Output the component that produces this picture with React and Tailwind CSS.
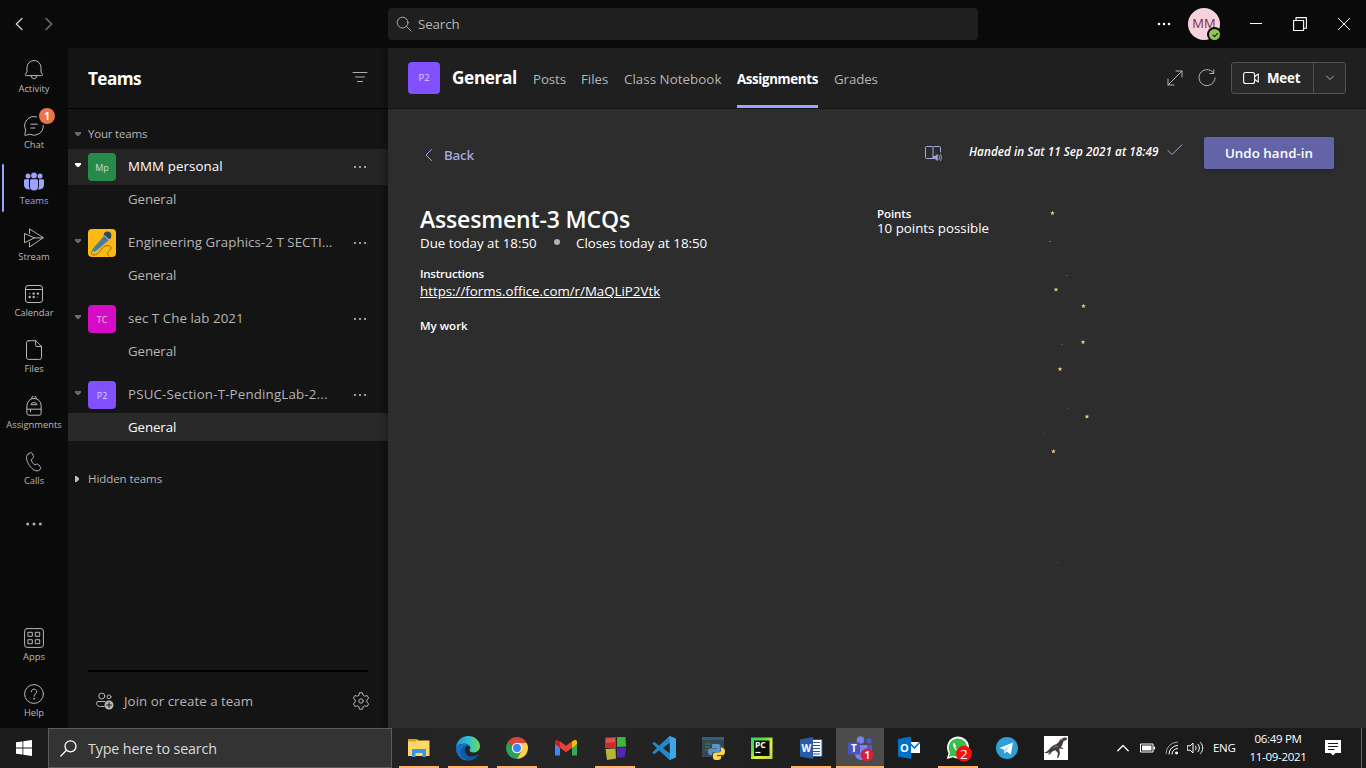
import React from "react";

function Svg({ w = 20, h = w, vb, className = "", sw = 1, children }) {
  return (
    <svg width={w} height={h} viewBox={vb || `0 0 ${w} ${h}`} className={`shrink-0 ${className}`} fill="none" stroke="currentColor" strokeWidth={sw} strokeLinecap="round" strokeLinejoin="round">
      {children}
    </svg>
  );
}

function Dots({ w = 16, r = 1.2, gap = 5, className = "" }) {
  return (
    <svg width={w} height="6" className={`shrink-0 ${className}`} fill="currentColor">
      <circle cx={w / 2 - gap} cy="3" r={r} />
      <circle cx={w / 2} cy="3" r={r} />
      <circle cx={w / 2 + gap} cy="3" r={r} />
    </svg>
  );
}

/* ---------- title bar ---------- */

function TitleBar() {
  return (
    <header className="flex h-12 shrink-0 items-center bg-[#0a0a0a]">
      <div className="flex w-[388px] items-center gap-[22px] pl-[15px]">
        <Svg w={8} h={14} className="text-[#d0d0d0]" sw={1.3}><path d="M7 1.5 1.3 7 7 12.5" /></Svg>
        <Svg w={8} h={14} className="text-[#7a7a7a]" sw={1.3}><path d="M1 1.5 6.7 7 1 12.5" /></Svg>
      </div>
      <div className="flex h-8 w-[590px] items-center rounded bg-[#1f1f1f] pl-2">
        <Svg w={16} className="text-[#adadad]"><circle cx="6.6" cy="6.6" r="5.4" /><path d="m10.5 10.5 4.6 4.6" /></Svg>
        <span className="pt-[2px] pl-[6px] text-[13.3px] tracking-[-0.1px] text-[#b5b5b5]">Search</span>
      </div>
      <Dots className="ml-[178px] text-white" r={1.25} />
      <div className="relative ml-4 flex size-8 items-center justify-center rounded-full bg-[#f6d2dd] text-[13px] font-medium tracking-[0px] text-[#7d2a45]">
        MM
        <span className="absolute right-0 bottom-0 flex size-[11px] items-center justify-center rounded-full bg-[#92c353] ring-2 ring-[#0a0a0a]">
          <Svg w={8} className="text-[#16240a]" sw={1.2}><path d="M2 4.2 3.5 5.7 6.4 2.6" /></Svg>
        </span>
      </div>
      <Svg w={12} className="ml-[30px] text-white" sw={1}><path d="M0 5.5h12" /></Svg>
      <Svg w={14} className="ml-[31px] text-white" sw={1.1}><path d="M.6 3.5h10v10H.6zM3 3.2V.6h10.4v10.6h-2.6" /></Svg>
      <Svg w={12} className="ml-[31px] text-white" sw={1}><path d="m.3.3 11.4 11.4M11.7.3.3 11.7" /></Svg>
    </header>
  );
}

/* ---------- app rail ---------- */

const railIcons = {
  Activity: (
    <Svg w={20}><path d="M2 15.6c-.6 0-.9-.5-.6-1L3 12V7.500a7 7 0 0 1 14 0V12l1.600 2.600c.3.5 0 1-.6 1zM7.200 15.900c.3 1.900 1.500 2.900 2.800 2.900s2.500-1 2.800-2.900" /></Svg>
  ),
  Chat: (
    <Svg w={20}><path d="M12.500.9A9.300 9.300 0 0 0 1.800 14.200L.7 18.700c-.1.500.2.8.7.700l4.300-1.200A9.300 9.300 0 0 0 19.300 9.500M6.800 8.200h6.600M6.800 12h4" /></Svg>
  ),
  Stream: (
    <Svg w={20}><path d="M5.500 5.500V.9L19.300 9.700 5.500 19v-4.500M.8 5.600 10.500 9.900.8 14.600zM10.500 9.900h8.500" /></Svg>
  ),
  Calendar: (
    <Svg w={20}>
      <rect x="1.500" y="1.500" width="17" height="17" rx="2.500" /><path d="M1.500 5.500h17" />
      <g fill="currentColor" stroke="none"><circle cx="9.700" cy="9.600" r="1.200" /><circle cx="13.900" cy="9.600" r="1.200" /><circle cx="5.700" cy="13" r="1.200" /><circle cx="9.700" cy="13" r="1.200" /><circle cx="5.700" cy="9.600" r=".6" /><circle cx="13.600" cy="13" r=".6" /></g>
    </Svg>
  ),
  Files: (
    <Svg w={20}><path d="M4.500.7h7.300l5.700 5.700v11a2 2 0 0 1-2 2h-11a2 2 0 0 1-2-2v-14.700a2 2 0 0 1 2-2zM11.600.9v4.600a1 1 0 0 0 1 1h4.700" /></Svg>
  ),
  Assignments: (
    <Svg w={20}><path d="M2.900 9.500a7.100 7.100 0 0 1 14.200 0v7.700a2 2 0 0 1-2 2H4.900a2 2 0 0 1-2-2zM7.800 2.700V2a2.200 2.200 0 0 1 4.400 0v.7M3 13.200h14M6.500 13.400v2.400M7 8.300c0-2.400 6-2.400 6 0z" /></Svg>
  ),
  Calls: (
    <Svg w={20}><path d="M4 2.200 6 .9c1-.5 1.900-.2 2.400.8l1 2.300c.4.900.1 1.700-.6 2.400L7.300 7.600c.3 2 1.600 4 3.300 5.200l2-.6c.9-.3 1.800 0 2.300.8l1.500 2.100c.6.900.4 1.700-.4 2.500-1.700 1.700-4 1.700-6.300.2C5.500 15 2.600 9.500 2.500 5.600 2.500 4 3 2.900 4 2.200z" /></Svg>
  ),
  Apps: (
    <Svg w={20}><rect x=".6" y=".6" width="18.800" height="18.800" rx="2.500" /><path d="M4.300 4.300h4v4h-4zM11.700 4.300h4v4h-4zM4.300 11.700h4v4h-4zM11.700 11.700h4v4h-4z" /></Svg>
  ),
  Help: (
    <Svg w={20}><circle cx="10" cy="10" r="9.400" /><path d="M7.300 7.700c0-3.500 5.400-3.500 5.400 0 0 2-2.700 2.200-2.700 4.600" /><circle cx="10" cy="14.800" r=".4" fill="currentColor" /></Svg>
  ),
  Teams: (
    <svg width="20" height="20" fill="currentColor" className="shrink-0">
      <circle cx="4" cy="3.900" r="2.500" /><circle cx="10" cy="3.400" r="2.900" /><circle cx="16" cy="3.900" r="2.500" />
      <path d="M0 8.500A1.300 1.300 0 0 1 1.300 7.200H5v6.200c0 1.400.3 2.700 1 3.800C2.600 18 0 16 0 13zM6 8.500a1.300 1.300 0 0 1 1.300-1.300h5.400A1.300 1.300 0 0 1 14 8.500v5.900a4 4 0 0 1-8 0zM15 7.200h3.700A1.300 1.300 0 0 1 20 8.500V13c0 3-2.600 5-6 4.200.7-1.100 1-2.400 1-3.800z" />
    </svg>
  ),
};

function RailItem({ name, active, badge }) {
  return (
    <div className={`relative flex h-14 shrink-0 flex-col items-center pt-3 ${active ? "text-[#9ea2ff]" : "text-[#b8b8b8]"}`}>
      {active && <span className="absolute top-1 left-[2px] h-12 w-[2px] rounded bg-[#9ea2ff]" />}
      {railIcons[name]}
      <span className="mt-[3px] text-[9.400px] leading-3 tracking-[-0.020px]">{name}</span>
      {badge && (
        <span className="absolute top-1 left-[39px] flex size-4 items-center justify-center rounded-full bg-[#e97548] text-[10px] font-bold text-white">{badge}</span>
      )}
    </div>
  );
}

function Rail() {
  return (
    <nav className="flex w-[68px] shrink-0 flex-col bg-[#0a0a0a]">
      <RailItem name="Activity" />
      <RailItem name="Chat" badge="1" />
      <RailItem name="Teams" active />
      <RailItem name="Stream" />
      <RailItem name="Calendar" />
      <RailItem name="Files" />
      <RailItem name="Assignments" />
      <RailItem name="Calls" />
      <div className="flex h-14 items-center justify-center text-[#adadad]"><Dots w={20} r={1.500} gap={6.300} /></div>
      <div className="flex-1" />
      <RailItem name="Apps" />
      <RailItem name="Help" />
    </nav>
  );
}

/* ---------- teams list ---------- */

function Caret({ className = "" }) {
  return <svg width="6" height="4" className={`shrink-0 ${className}`} fill="currentColor"><path d="M0 0h6v1.500L3.800 4H2.200L0 1.500z" /></svg>;
}

function Mic() {
  return (
    <svg width="28" height="28" className="shrink-0 rounded bg-[#fdb813]">
      <path d="M5 21c-4 4 0 6.500 4 4s5-8 10-8.500c4.500-.3 5 3 2.500 5-3 2.500-2 5 0 6" fill="none" stroke="#8a6a1a" strokeWidth="1" />
      <path d="m16 7 5 4L8 22l-3-2.500z" fill="#4b7ba5" />
      <path d="m7 18 2.500 2.500L6.500 23 4 21z" fill="#1c96b4" />
      <circle cx="19.500" cy="6.500" r="3.900" fill="#334766" /><path d="m15 6 6 5" stroke="#8fb4cf" strokeWidth="1.500" />
    </svg>
  );
}

function Team({ name, tag, color, active, open, track }) {
  return (
    <section className="mb-3 flex flex-col">
      <div className={`flex h-9 items-center pl-[7px] ${active ? "bg-[#242424] text-white" : "text-[#b5b5b5]"}`}>
        <Caret className={`mb-1 ${active ? "text-white" : "text-[#6b6b6b]"}`} />
        <div className="ml-[7px]">
          {tag ? <span className={`flex size-7 items-center justify-center rounded pt-px text-[9px] text-white/75 ${color}`}>{tag}</span> : <Mic />}
        </div>
        <span className={`ml-3 w-[224px] whitespace-nowrap text-[13.300px] ${track}`}>{name}</span>
        <Dots className="text-[#bdbdbd]" r={1.100} />
      </div>
      <div className={`flex h-7 items-center pt-px pl-[60px] text-[13.300px] tracking-[-0.100px] ${open ? "bg-[#292929] text-white" : "text-[#b5b5b5]"}`}>General</div>
    </section>
  );
}

function Sidebar() {
  return (
    <aside className="flex w-[320px] shrink-0 flex-col bg-[#141414]">
      <div className="flex h-[61px] shrink-0 items-center justify-between border-b border-black pr-5 pl-5">
        <h1 className="pt-[2px] text-[17.200px] font-bold tracking-[-0.600px] text-white">Teams</h1>
        <Svg w={16} className="mb-[2px] text-[#adadad]"><path d="M1 3.500h14M3.500 8h9M5.500 12.500h5" /></Svg>
      </div>
      <div className="flex h-10 items-center pt-[9px] pl-[7px] text-[#b5b5b5]">
        <Caret className="text-[#6b6b6b]" />
        <span className="ml-[7px] text-[11.500px] tracking-[-0.200px]">Your teams</span>
      </div>
      <Team name="MMM personal" tag="Mp" color="bg-[#268a4b]" active track="tracking-[0.100px]" />
      <Team name="Engineering Graphics-2 T SECTI..." track="tracking-[0.060px]" />
      <Team name="sec T Che lab 2021" tag="TC" color="bg-[#d60bc6]" track="tracking-[0.060px]" />
      <Team name="PSUC-Section-T-PendingLab-2..." tag="P2" color="bg-[#8250ff]" open track="tracking-[0.180px]" />
      <div className="mt-4 flex h-5 items-center pl-[7px] text-[#b5b5b5]">
        <svg width="4" height="6" fill="#bdbdbd"><path d="M0 0h1.500L4 2.200v1.600L1.500 6H0z" /></svg>
        <span className="ml-[9px] text-[11.500px] tracking-[-0.080px]">Hidden teams</span>
      </div>
      <div className="mx-5 mt-auto h-[2px] bg-black" />
      <div className="flex h-14 shrink-0 items-center pt-[2px] pr-[18px] pl-7 text-[#b5b5b5]">
        <Svg w={18}>
          <circle cx="5.800" cy="4" r="3" /><circle cx="13" cy="4.800" r="1.900" /><path d="M8.200 14.500H4.500C2 14.500.6 13.300.6 11.600v-.7c0-.8.6-1.400 1.400-1.400h7" />
          <circle cx="13" cy="13" r="4.500" fill="currentColor" stroke="none" /><path d="M13 10.700v4.600M10.700 13h4.600" stroke="#141414" />
        </Svg>
        <span className="ml-[10px] flex-1 pt-[2px] text-[13.300px] tracking-[0.030px]">Join or create a team</span>
        <Svg w={18} vb="0 0 18 18"><circle cx="9" cy="9" r="2.200" /><path d="M7.500.8h3l.6 2.500 1.500.9 2.500-.7 1.500 2.600L14.800 8v2l1.800 1.900-1.500 2.600-2.500-.7-1.500.9-.6 2.500h-3l-.6-2.500-1.500-.9-2.500.7-1.500-2.600L3.200 10V8L1.400 6.100l1.500-2.600 2.500.7 1.500-.9z" /></Svg>
      </div>
    </aside>
  );
}

/* ---------- channel ---------- */

function ChannelHeader() {
  return (
    <div className="flex h-[61px] shrink-0 items-stretch border-b border-[#141414] bg-[#1f1f1f] pr-5 pl-5 text-[13.300px] text-[#b5b5b5]">
      <span className="mt-[14px] flex size-8 items-center justify-center rounded bg-[#8250ff] pt-px text-[9.500px] text-white/75">P2</span>
      <h2 className="ml-3 w-[81px] pt-[16px] text-[17.200px] leading-7 font-bold tracking-[-0.360px] whitespace-nowrap text-white">General</h2>
      <span className="w-12 pt-[22px] tracking-[-0.100px]">Posts</span>
      <span className="w-[43px] pt-[22px]">Files</span>
      <span className="w-[113px] pt-[22px] whitespace-nowrap tracking-[0.060px]">Class Notebook</span>
      <span className="mr-4 w-[81px] border-b-[3px] border-[#9ea2ff] pt-[22px] font-bold tracking-[-0.350px] text-white">Assignments</span>
      <span className="pt-[22px] tracking-[-0.100px]">Grades</span>
      <div className="ml-auto flex items-center">
        <Svg w={16}><path d="M1 15 15 1M9 1h6v6M1 9v6h6" strokeLinejoin="miter" /></Svg>
        <Svg w={18} className="ml-[15px]"><path d="M15 3.300A8 8 0 1 0 17 9M15.800.8V4.500h-4" /></Svg>
        <div className="ml-[15px] flex h-8 w-[115px] items-center rounded-[3px] border border-[#525252] bg-[#292929] text-white">
          <div className="flex h-full w-[82px] items-center border-r border-[#525252] pl-[11px]">
            <Svg w={16} h={14} sw={1.100}><rect x=".6" y="1.500" width="11" height="11" rx="2" /><path d="m11.800 5.500 3.500-2.600v8.200l-3.500-2.600" /></Svg>
            <span className="ml-2 pt-[2px] font-bold tracking-[-0.200px]">Meet</span>
          </div>
          <Svg w={8} h={6} className="ml-3 text-[#adadad]"><path d="m.5 1 3.500 3.500L7.500 1" /></Svg>
        </div>
      </div>
    </div>
  );
}

const stars = [[1052.500, 213], [1056, 289.500], [1083.500, 306], [1083, 342], [1060, 369], [1087, 416.500], [1053.500, 451.300]];
const specks = [[1049, 241, 2, "#2b7f9f"], [1066, 275, 1, "#2f8fb8"], [1061, 344, 2, "#27586c"], [1042, 347, 1, "#2b4d4c"], [1067, 408, 1, "#26706a"], [1043, 433, 1, "#555555"], [1057, 562, 1, "#555555"]];

function Confetti() {
  return (
    <svg className="pointer-events-none absolute top-0 left-0" width="978" height="619" viewBox="388 109 978 619">
      {stars.map(([x, y]) => (
        <path key={x} d={`M${x} ${y - 2.300}l.6 1.500 1.700.1-1.300 1.100.4 1.700-1.400-.9-1.500.9.500-1.700-1.300-1.100 1.700-.1z`} fill="#e8c878" />
      ))}
      {specks.map(([x, y, w, c]) => <rect key={y} x={x} y={y} width={w} height="1" fill={c} />)}
    </svg>
  );
}

function Assignment() {
  return (
    <div className="relative flex flex-1 flex-col bg-[#2d2d2d] pr-8 pl-8 text-white">
      <div className="mt-7 flex h-8 items-center text-[#a6a7dc]">
        <Svg w={8} h={12} className="ml-[5px] mt-1"><path d="M6.500.5 1 6l5.500 5.500" /></Svg>
        <span className="mt-[6px] ml-[11px] text-[13.300px] font-semibold tracking-[-0.200px]">Back</span>
        <Svg w={17} h={17} className="ml-auto">
          <path d="M8 2.500v11H1.500a1 1 0 0 1-1-1V2.500a1 1 0 0 1 1-1H7zM8 2.500l1-1h5.500a1 1 0 0 1 1 1V7" />
          <path d="M8.500 11.500h1.700l2-2v6l-2-2H8.500z" fill="currentColor" /><path d="M14 10.500c.8 1 .8 3 0 4M15.600 9.500c1 1.500 1 4.500 0 6" />
        </Svg>
        <span className="mb-[3px] ml-[27px] w-[191px] text-[11.700px] font-semibold tracking-[0.050px] whitespace-nowrap text-white italic">Handed in Sat 11 Sep 2021 at 18:49</span>
        <Svg w={16} h={12} className="mb-[7px] ml-[7px]"><path d="m1 6.500 4 4L15 .8" /></Svg>
        <button className="ml-[21px] h-8 w-[130px] rounded-[2px] bg-[#6264a7] pt-[2px] text-[13.300px] font-semibold tracking-[0.060px] text-white shadow-md">Undo hand-in</button>
      </div>
      <div className="mt-[38px] flex">
        <div className="w-[457px]">
          <h3 className="text-[23px] leading-[25px] font-semibold tracking-[-0.160px]">Assesment-3 MCQs</h3>
          <div className="flex h-5 items-center text-[13.300px] leading-4">
            <span className="w-[134px] pt-[2px]">Due today at 18:50</span>
            <span className="size-[6px] rounded-full bg-[#b3b3b3]" />
            <span className="ml-4 pt-[2px]">Closes today at 18:50</span>
          </div>
          <p className="mt-[14px] text-[11.500px] leading-4 font-semibold tracking-[-0.220px]">Instructions</p>
          <p className="mt-[-1px] text-[13.300px] leading-5"><a className="underline">https://forms.office.com/r/MaQLiP2Vtk</a></p>
          <p className="mt-[17px] text-[11.500px] leading-4 font-semibold">My work</p>
        </div>
        <div>
          <p className="text-[11.500px] leading-[14px] font-semibold tracking-[-0.060px]">Points</p>
          <p className="mt-[-1px] text-[13.300px] leading-4">10 points possible</p>
        </div>
      </div>
      <Confetti />
    </div>
  );
}

/* ---------- taskbar ---------- */

function Logo({ children }) {
  return <svg width="24" height="24" className="shrink-0 overflow-visible">{children}</svg>;
}

const taskApps = [
  { id: "explorer", run: true, icon: <Logo><path d="M1 3h9l2 2H1z" fill="#e09b00" /><path d="M1 4.500h21.500V20H1z" fill="#ffd766" /><path d="M1 3h8v2.500H1z" fill="#e3a008" /><path d="M5 13h14v8h-3.500v-4h-7v4H5z" fill="#3f96e0" /></Logo> },
  { id: "edge", run: true, icon: <Logo>
    <defs><linearGradient id="edgeTop" x1="0" x2="1"><stop offset="0" stopColor="#1f8fd6" /><stop offset=".5" stopColor="#2cc0d6" /><stop offset="1" stopColor="#6edb56" /></linearGradient></defs>
    <path d="M0 12C0 5 5.500 0 12 0c7 0 12 5 12 10 0 4-3 6.500-6.500 6.500-3 0-4-1.200-4-2.200 1.500-1.600 1.300-5.300-3-6.300C6 7.300 1.500 8.500 0 12z" fill="url(#edgeTop)" />
    <path d="M0 12c1.500-3.500 6-4.700 10.500-4 2.500.6 3.800 2.200 4 3.800-1-1.400-2-2-3.200-2.200C9.500 10.300 8.600 12 8.500 14c0 4.500 4.500 8 9.500 6.500 2-.5 3.500-1.500 4.700-2.500A12 12 0 0 1 0 12z" fill="#1273c4" />
    <path d="M8.500 14c0 4.500 4.500 8 9.500 6.500 2-.5 3.500-1.500 4.700-2.500A12 12 0 0 1 12 24c-4.500-1-7.500-4-7.500-8 0-3.500 3-6.500 6.800-6.400C9.500 10.300 8.600 12 8.500 14z" fill="#0c59a4" />
  </Logo> },
  { id: "chrome", run: true, icon: <Logo><path d="M12 12 2.500 6.500A11 11 0 0 1 21.500 6.500z" fill="#db4437" /><path d="M12 12 2.500 6.500A11 11 0 0 0 12 23l4.700-8.300z" fill="#2da05a" /><path d="M12 7h9.800A11 11 0 0 1 12 23l4.500-8.200z" fill="#ffd04c" /><circle cx="12" cy="12" r="5.200" fill="#fff" /><circle cx="12" cy="12" r="4.200" fill="#4285f4" /></Logo> },
  { id: "gmail", icon: <Logo><path d="M1 6v13.500h5V10z" fill="#4285f4" /><path d="M23 6v13.500h-5V10z" fill="#34a853" /><path d="M18 5.500 21 3.700c1 0 2 .8 2 2V8l-5 4z" fill="#fbbc04" /><path d="M6 5.500 3 3.700c-1 0-2 .8-2 2V8l5 4z" fill="#c5221f" /><path d="m6 5.300 6 4.500 6-4.500v6.500l-6 4.500-6-4.500z" fill="#ea4335" /></Logo> },
  { id: "blocks", run: true, icon: <Logo><path d="M2 1.500 13 1v11H2z" fill="#cf2a2a" /><path d="M14 1h8.500l.5 9.500-9 .5z" fill="#3fb53a" /><path d="m2.500 13 10-.5.5 10-9 1.500z" fill="#bcb438" /><path d="m14 12 9-.5L21.500 21l-7.500.5z" fill="#5325b5" /><path d="M3 2.500 12 2v4l-9 1z" fill="#e98080" opacity=".5" /></Logo> },
  { id: "vscode", icon: <Logo><path d="m17.500 0 6.500 2.800v18.400L17.500 24 7 14.300 2.500 18 0 16.800 5 12 0 7.200 2.500 6 7 9.700zM18 6.500 11 12l7 5.500z" fill="#2489ca" fillRule="evenodd" /><path d="m17.500 0 6.500 2.800v18.400L17.500 24l.5-1z" fill="#3ba6e8" /></Logo> },
  { id: "python", icon: <Logo><path d="M1 1h22v20H1z" fill="#36484f" /><path d="M1 1h22v3H1z" fill="#2e6080" /><path d="M4 8h6M4 11h5M4 14h4" stroke="#3d7a4a" /><path d="M12 8h5c1.500 0 2.500 1 2.500 2.500V14c0 1.500-1 2-2 2h-4c-2 0-2.500 1-2.500 3-3 .5-4-1-4-3.500s1.500-3 3-3h6V12h-5v-2.500c0-1 .5-1.500 1-1.500z" fill="#5794c7" /><path d="M20 11.500c2.500 0 4 1 4 4s-1.500 3.500-3 3.500h-5v1h4v2c0 1.500-1.500 2-4 2s-4-.5-4-2v-3c0-1.500 1-2.500 2.500-2.500h3c2 0 2.500-1 2.500-2.500z" fill="#ffd54a" /></Logo> },
  { id: "pycharm", icon: <Logo><defs><linearGradient id="pyc" x1="0" x2="1" y1="0" y2="1"><stop offset="0" stopColor="#21d789" /><stop offset=".35" stopColor="#5ee51e" /><stop offset=".6" stopColor="#e8f04a" /><stop offset="1" stopColor="#b9d43c" /></linearGradient></defs><path d="M1 1.500h21.500V23H1z" fill="url(#pyc)" /><path d="M4 4.500h15.500V20H4z" fill="#0b0f08" /><text x="5" y="12" fontSize="8.500" fontWeight="700" fontFamily="Open Sans" fill="#fff">PC</text><path d="M5.500 16.500h5" stroke="#fff" strokeWidth="1.200" /></Logo> },
  { id: "word", run: true, icon: <Logo><path d="M12 3.500h11v17H12z" fill="#fff" stroke="#2b579a" /><path d="M14 6.500h7M14 9.500h7M14 12.500h7M14 15.500h7M14 18h7" stroke="#2b579a" strokeWidth="1.200" /><path d="M1 3.500 14 1v22L1 20.500z" fill="#2b5caa" /><text x="2.500" y="16" fontSize="10" fontWeight="700" fontFamily="Open Sans" fill="#fff">W</text></Logo> },
  { id: "teams", run: true, active: true, icon: <Logo><circle cx="12.500" cy="4" r="3.800" fill="#7b83eb" /><circle cx="21" cy="5" r="2.700" fill="#5059c9" /><path d="M17 9h7v7c0 3-3 4-5 3z" fill="#5059c9" /><path d="M8 9h11v9c0 4-3 6-6 6s-6-3-6-6z" fill="#7b83eb" /><path d="M0 6.500h12v12H0z" fill="#4b53bc" /><text x="3" y="16" fontSize="10" fontWeight="700" fontFamily="Open Sans" fill="#fff">T</text><circle cx="19" cy="19" r="6.500" fill="#d3213c" /><text x="16.200" y="23" fontSize="11" fontWeight="600" fontFamily="Open Sans" fill="#fff">1</text></Logo> },
  { id: "outlook", icon: <Logo><path d="M12 6h11v11H12z" fill="#fff" /><path d="m12.500 7 5 5 5.500-6" stroke="#0072c6" strokeWidth="1.600" fill="none" /><path d="M1 3 14 .5v22.500L1 20.500z" fill="#0072c6" /><text x="3" y="16" fontSize="11" fontWeight="700" fontFamily="Open Sans" fill="#fff">O</text></Logo> },
  { id: "whatsapp", run: true, icon: <Logo><path d="M.8 23 2.500 17A11 11 0 1 1 7 21.300z" fill="#fff" /><path d="m2.800 21 1.200-4.500A9.200 9.200 0 1 1 7.300 19.700z" fill="#35bf4b" /><path d="M8 6.500c-2 2-.3 5.500 2.200 7.800 2.800 2.700 5.800 3 6.300 1.200l-2.300-1.700-1.200 1c-2-.8-3.200-2.200-3.800-3.500l.9-1.300z" fill="#fff" /><circle cx="18" cy="17.700" r="8" fill="#f50f0f" /><text x="14.100" y="22.500" fontSize="13.500" fontFamily="Open Sans" fill="#fff">2</text></Logo> },
  { id: "telegram", icon: <Logo><circle cx="12" cy="12" r="11" fill="#2da0d8" /><path d="m4.500 12 13.500-5.500-2.200 12-4-3-2.200 2-.6-3.800z" fill="#fff" /><path d="m9.300 13.500 6.500-5-4.500 6-1.500 3z" fill="#b7d9ec" /></Logo> },
  { id: "dino", icon: <Logo><path d="M0 0h24v24H0z" fill="#fff" /><path d="M0 16.500c4 0 6-5.500 10-7.500 3-1 5-2.500 6-5.500l4-2 3 .3-.2 2-3.300 1.500c-1 3-1.500 4.500-2.500 6l2.300 1-.3.800-3.500-.8c-.5 2 .5 3.500.5 5l-1.500 4.500h-1.500l1-4.500-2.500-3-3 1-2.500 3L4 18.500l2-3C4 17.500 2 17.500 0 16.500z" fill="#443c38" /><path d="m9 12 3-2 2 1M16 4l3-.500" stroke="#8b7aa0" fill="none" /></Logo> },
];

function Taskbar() {
  return (
    <footer className="flex h-10 shrink-0 items-stretch bg-gradient-to-r from-[#1b1b1b] via-[#262626] via-40% to-[#1b1b1b] to-70% text-white">
      <div className="flex w-12 items-center justify-center">
        <svg width="16" height="16" fill="#fff"><path d="M0 2.300 6.500 1.400v6.200H0zM7.300 1.300 16 0v7.600H7.300zM0 8.400h6.500v6.200L0 13.700zM7.300 8.400H16V16l-8.700-1.300z" /></svg>
      </div>
      <div className="flex w-[344px] items-center border border-[#5c5c5c] bg-[#333333] pl-[11px]">
        <Svg w={17} sw={1.300}><circle cx="10.500" cy="6.300" r="5.500" /><path d="M6.500 10.300.8 16" /></Svg>
        <span className="ml-[11px] pt-px text-[14.300px] tracking-[-0.140px] text-[#dadada]">Type here to search</span>
      </div>
      <div className="ml-[3px] flex">
        {taskApps.map((a) => (
          <div key={a.id} className={`mr-px flex w-12 flex-col items-center justify-between pt-2 ${a.active ? "bg-[#4c4c4c]" : ""}`}>
            {a.icon}
            <span className={`h-[2px] ${a.active ? "w-12" : "w-10"} ${a.run ? "bg-[#ffb26b]" : ""}`} />
          </div>
        ))}
      </div>
      <div className="ml-auto flex items-center">
        <Svg w={12} h={8} sw={1.300}><path d="m.8 6.800 5.200-5.300 5.200 5.300" /></Svg>
        <svg width="16" height="10" className="ml-[11px]"><path d="M.5 1h12.500v8H.5z" fill="none" stroke="#fff" /><path d="M2 2.500h9.500v5H2zM13.500 3.500H15v3h-1.500z" fill="#fff" /></svg>
        <Svg w={14} h={14} className="ml-[9px]"><path d="M1 12.500A11.500 11.500 0 0 1 12.500 1" opacity=".6" /><path d="M4 13a8.500 8.500 0 0 1 8.500-8.500M7 13a5.500 5.500 0 0 1 5.500-5.500" /><circle cx="11.500" cy="12" r="1" fill="#fff" /></Svg>
        <Svg w={17} h={14} className="ml-2"><path d="M.6 4.800h2.700L6 2v10L3.300 9.200H.6zM8.500 5c.8 1 .8 3 0 4M11 3.300c1.800 2 1.800 5.400 0 7.400M13.500 1.500c3 3 3 8 0 11" /></Svg>
        <span className="ml-[9px] w-[25px] text-[11.500px] tracking-[-0.300px]">ENG</span>
        <div className="ml-[7px] flex w-[66px] flex-col items-center text-[11.500px] leading-[18px] tracking-[-0.300px] whitespace-nowrap">
          <span>06:49 PM</span>
          <span>11-09-2021</span>
        </div>
        <svg width="16" height="16" className="ml-[14px]"><path d="M0 0h16v13H10.500L8 15.500 5.500 13H0z" fill="#fff" /><path d="M3 3.500h10M3 6.500h10M3 9.500h6.500" stroke="#1b1b1b" /></svg>
        <span className="ml-5 h-10 w-px bg-[#6a6a6a]" />
        <span className="w-1" />
      </div>
    </footer>
  );
}

export default function App() {
  return (
    <div className="flex h-[768px] w-[1366px] flex-col overflow-hidden font-['Open_Sans','Noto_Sans',sans-serif]">
      <TitleBar />
      <div className="flex h-[680px] shrink-0">
        <Rail />
        <Sidebar />
        <main className="flex flex-1 flex-col shadow-[-2px_0_6px_rgba(0,0,0,0.35)]">
          <ChannelHeader />
          <Assignment />
        </main>
      </div>
      <Taskbar />
    </div>
  );
}
